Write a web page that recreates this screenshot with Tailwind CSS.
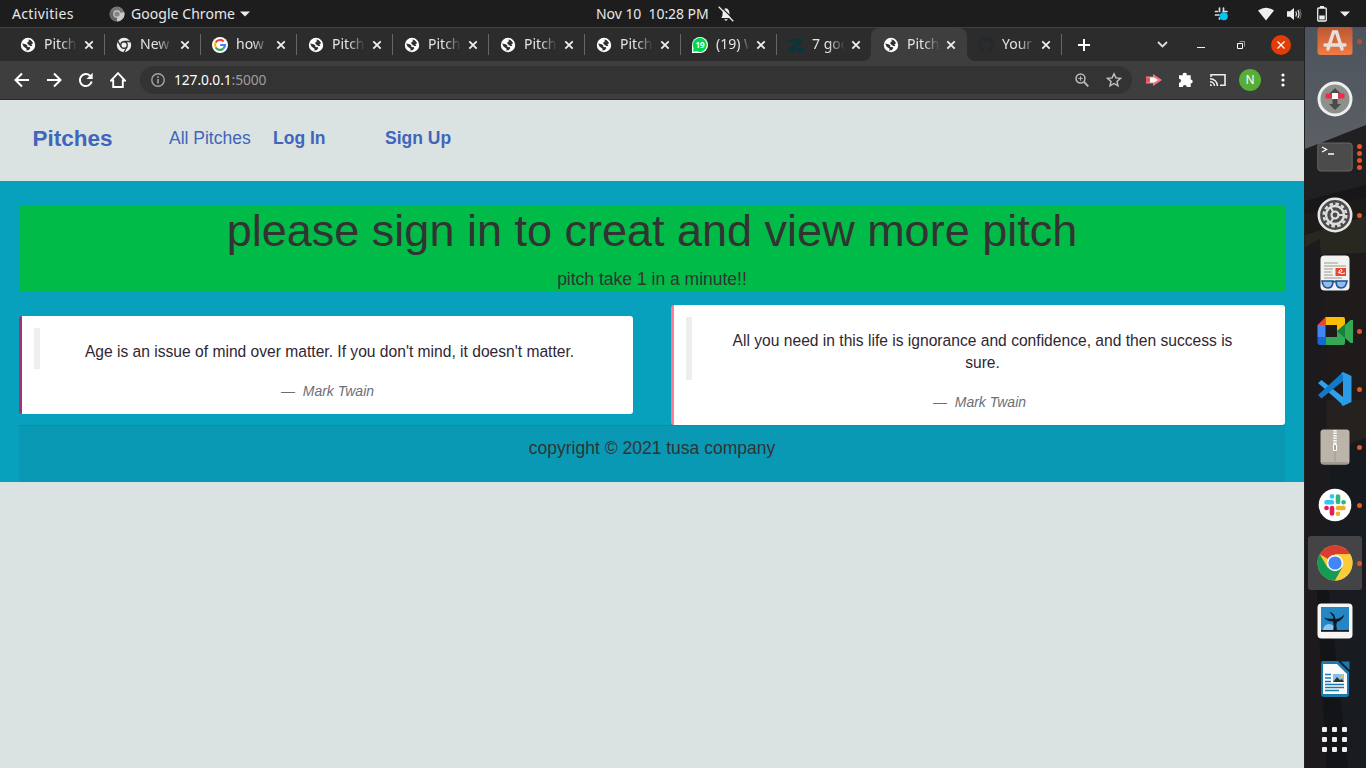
<!DOCTYPE html>
<html lang="en">
<head>
<meta charset="utf-8">
<title>Pitches</title>
<script src="https://cdn.jsdelivr.net/npm/@tailwindcss/browser@4"></script>
</head>
<body class="w-[1366px] h-[768px] overflow-hidden bg-[#1d1d1d] font-['Noto_Sans','Open_Sans',sans-serif]">
<svg width="0" height="0" class="absolute">
  <defs>
    <symbol id="globe" viewBox="0 0 16 16"><circle cx="8" cy="8" r="7.200" fill="#fff"/><path d="M2.200 6.500L5.500 7.200 7.500 8.500 7 9.700 10 10.300 10.200 11.500 8.500 13.300 6 13.500 6.800 12 5.200 10.800 3.500 9.500zM8 2.500L10.500 3 12.700 5.200 12.500 7 11.200 7.500 12.500 8.700 10.800 9.200 9 8.200 7.200 6.500 7.600 5 9.200 4.300z" fill="#303030"/></symbol>
    <symbol id="x" viewBox="0 0 10 10"><path d="M1.300 1.300l7.400 7.400M8.700 1.300L1.300 8.700" stroke="#efefef" stroke-width="1.800" fill="none"/></symbol>
  </defs>
</svg>
<div class="flex h-full flex-col">
  <!-- system bar -->
  <header class="relative flex h-[27px] shrink-0 items-center text-[14px] text-[#e8e8e8]">
    <span class="ml-3 w-[97px] whitespace-nowrap tracking-[0.350px]">Activities</span>
    <svg class="h-4 w-4" viewBox="0 0 16 16"><circle cx="8" cy="8" r="7.500" fill="#777"/><path d="M8 8L15.200 6A7.500 7.500 0 0 1 8 15.500z" fill="#c9c9c9"/><path d="M8 8L1.500 4.500A7.500 7.500 0 0 0 8 15.500z" fill="#666"/><circle cx="8" cy="8" r="3.800" fill="#c9c9c9"/><circle cx="8" cy="8" r="2.600" fill="#858585"/></svg>
    <span class="ml-[6px] w-[104px] whitespace-nowrap tracking-[0.050px]">Google Chrome</span>
    <svg class="ml-[5px] h-[6px] w-[10px]" viewBox="0 0 10 6"><path d="M0 .5h10L5 5.500z" fill="#eee"/></svg>
    <span class="ml-[346px] w-[113px] whitespace-pre tracking-[-0.050px]">Nov 10  10:28 PM</span>
    <svg class="ml-[9px] h-4 w-4" viewBox="0 0 16 16"><path d="M3.200 12c1.300-1.300 1.300-3 1.400-5C4.800 4 6 2.500 8 2.200 10 2.500 11.200 4 11.400 7c.1 2 .2 3.500 1.500 5z" fill="#eee"/><path d="M6 13.200h4L8 15z" fill="#eee"/><path d="M2.200 0L16 13.800" stroke="#1d1d1d" stroke-width="1.200"/><path d="M.7.700l14.600 14.600" stroke="#eee" stroke-width="1.300"/></svg>
    <div class="ml-auto flex items-center pr-4">
      <svg class="h-[15px] w-[15px]" viewBox="0 0 15 15"><g stroke="#ddd" stroke-width="1.700" stroke-linecap="round"><path d="M5.500 2v3.500M9.500 2v3M1.500 5.500h2M1.500 9H5M5.500 12v1M9 5.500h4"/></g><circle cx="9.800" cy="10.200" r="4" fill="#00c8f5"/></svg>
      <svg class="ml-[29px] h-4 w-4" viewBox="0 0 16 16"><path d="M0 4.500Q8-1 16 4.500L8 14.500z" fill="#efefef"/></svg>
      <svg class="ml-3 h-4 w-4" viewBox="0 0 16 16"><path d="M1 5.300h3L8 2v12L4 10.700H1z" fill="#efefef"/><path d="M9.800 5.500q1.500 2.500 0 5M11.800 4q2.400 4 0 8" stroke="#eee" stroke-width="1.200" fill="none"/><path d="M13.800 3q2.700 5 0 10" stroke="#777" fill="none"/></svg>
      <svg class="ml-[15px] h-4 w-[10px]" viewBox="0 0 10 16"><path d="M3 0h4v2H3z" fill="#eee"/><rect x=".7" y="2" width="8.600" height="13" rx="1" fill="none" stroke="#eee" stroke-width="1.300"/><path d="M2.300 9.500h5.400v4H2.300z" fill="#eee"/></svg>
      <svg class="ml-[13px] h-[6px] w-[10px]" viewBox="0 0 10 6"><path d="M0 .5h10L5 5.500z" fill="#eee"/></svg>
    </div>
  </header>

  <div class="flex min-h-0 flex-1">
    <section class="flex w-[1304px] shrink-0 flex-col">
      <!-- tab strip -->
      <div class="flex h-[34px] shrink-0 border-t border-[#404040] bg-[#2c2c2c] pl-2 text-[14px] leading-[20px] text-[#e4e4e4]">
        <div class="relative flex w-24 items-center pl-3"><svg class="h-4 w-4"><use href="#globe"/></svg><span class="mb-[2px] ml-2 w-[33px] overflow-hidden whitespace-nowrap mask-r-from-50%">Pitch</span><svg class="ml-[7px] h-[10px] w-[10px]"><use href="#x"/></svg><i class="absolute -right-px top-[6px] h-[21px] w-px bg-[#666]"></i></div>
        <div class="relative flex w-24 items-center pl-3"><svg class="h-4 w-4" viewBox="0 0 16 16"><circle cx="8" cy="8" r="7.200" fill="#eee"/><circle cx="8" cy="8" r="3.900" fill="#303030"/><circle cx="8" cy="8" r="2.600" fill="#eee"/><path d="M8 4.500h6.500M5 9.700L1.800 4.200M11 9.700L8 15.200" stroke="#303030" stroke-width="1.300"/></svg><span class="mb-[2px] ml-2 w-[33px] overflow-hidden whitespace-nowrap mask-r-from-50%">New</span><svg class="ml-[7px] h-[10px] w-[10px]"><use href="#x"/></svg><i class="absolute -right-px top-[6px] h-[21px] w-px bg-[#666]"></i></div>
        <div class="relative flex w-24 items-center pl-3"><svg class="h-4 w-4" viewBox="0 0 16 16"><circle cx="8" cy="8" r="8" fill="#fff"/><g fill="none" stroke-width="2.200"><path d="M11.700 4.500A5 5 0 0 0 3.700 5.500" stroke="#ea4335"/><path d="M3.700 5.500a5 5 0 0 0 0 5" stroke="#fbbc05"/><path d="M3.700 10.500a5 5 0 0 0 7.600 1.200" stroke="#34a853"/><path d="M11.300 11.700A5 5 0 0 0 13 8H8.200" stroke="#4285f4"/></g></svg><span class="mb-[2px] ml-2 w-[33px] overflow-hidden whitespace-nowrap mask-r-from-50%">how</span><svg class="ml-[7px] h-[10px] w-[10px]"><use href="#x"/></svg><i class="absolute -right-px top-[6px] h-[21px] w-px bg-[#666]"></i></div>
        <div class="relative flex w-24 items-center pl-3"><svg class="h-4 w-4"><use href="#globe"/></svg><span class="mb-[2px] ml-2 w-[33px] overflow-hidden whitespace-nowrap mask-r-from-50%">Pitch</span><svg class="ml-[7px] h-[10px] w-[10px]"><use href="#x"/></svg><i class="absolute -right-px top-[6px] h-[21px] w-px bg-[#666]"></i></div>
        <div class="relative flex w-24 items-center pl-3"><svg class="h-4 w-4"><use href="#globe"/></svg><span class="mb-[2px] ml-2 w-[33px] overflow-hidden whitespace-nowrap mask-r-from-50%">Pitch</span><svg class="ml-[7px] h-[10px] w-[10px]"><use href="#x"/></svg><i class="absolute -right-px top-[6px] h-[21px] w-px bg-[#666]"></i></div>
        <div class="relative flex w-24 items-center pl-3"><svg class="h-4 w-4"><use href="#globe"/></svg><span class="mb-[2px] ml-2 w-[33px] overflow-hidden whitespace-nowrap mask-r-from-50%">Pitch</span><svg class="ml-[7px] h-[10px] w-[10px]"><use href="#x"/></svg><i class="absolute -right-px top-[6px] h-[21px] w-px bg-[#666]"></i></div>
        <div class="relative flex w-24 items-center pl-3"><svg class="h-4 w-4"><use href="#globe"/></svg><span class="mb-[2px] ml-2 w-[33px] overflow-hidden whitespace-nowrap mask-r-from-50%">Pitch</span><svg class="ml-[7px] h-[10px] w-[10px]"><use href="#x"/></svg><i class="absolute -right-px top-[6px] h-[21px] w-px bg-[#666]"></i></div>
        <div class="relative flex w-24 items-center pl-3"><svg class="h-4 w-4" viewBox="0 0 16 16"><path d="M0 16V8a8 8 0 1 1 8 8z" fill="#fff"/><path d="M1.200 14.800L1.500 11A7 7 0 1 1 5 14.300z" fill="#00d750"/><text x="8.100" y="11" text-anchor="middle" font-size="8" font-weight="700" fill="#fff">19</text></svg><span class="mb-[2px] ml-2 w-[33px] overflow-hidden whitespace-nowrap mask-r-from-75%">(19) W</span><svg class="ml-[7px] h-[10px] w-[10px]"><use href="#x"/></svg><i class="absolute -right-px top-[6px] h-[21px] w-px bg-[#666]"></i></div>
        <div class="flex w-[95px] items-center pl-3"><svg class="h-4 w-4" viewBox="0 0 16 16"><path d="M0 2h7a3.500 3.500 0 0 1-7 0zM8.500 2H16L8.500 11zM7.500 5v9H0zM9 14a3.500 3.500 0 0 1 7 0z" fill="#03363d"/></svg><span class="mb-[2px] ml-2 w-[33px] overflow-hidden whitespace-nowrap mask-r-from-50%">7 goo</span><svg class="ml-[6px] h-[10px] w-[10px]"><use href="#x"/></svg></div>
        <div class="relative flex w-24 items-center rounded-t-lg bg-[#3e3e3e] pl-3"><svg class="absolute -left-2 bottom-0 h-2 w-2" viewBox="0 0 8 8"><path d="M8 0v8H0a8 8 0 0 0 8-8" fill="#3e3e3e"/></svg><svg class="absolute -right-2 bottom-0 h-2 w-2" viewBox="0 0 8 8"><path d="M0 0v8h8a8 8 0 0 1-8-8" fill="#3e3e3e"/></svg><svg class="h-4 w-4"><use href="#globe"/></svg><span class="mb-[2px] ml-2 w-[33px] overflow-hidden whitespace-nowrap mask-r-from-50%">Pitch</span><svg class="ml-[6px] h-[10px] w-[10px]"><use href="#x"/></svg></div>
        <div class="relative flex w-[95px] items-center pl-[11px]"><svg class="h-4 w-4" viewBox="0 0 16 16"><path fill="#24292f" d="M8 0C3.580 0 0 3.580 0 8c0 3.540 2.290 6.530 5.470 7.590.4.070.55-.17.55-.38v-1.490c-2.010.37-2.530-.49-2.690-.94-.09-.23-.48-.94-.82-1.130-.28-.15-.68-.52-.01-.53.63-.01 1.080.58 1.230.82.72 1.210 1.870.87 2.330.66.070-.52.280-.87.510-1.070-1.780-.2-3.640-.89-3.640-3.950 0-.87.310-1.590.82-2.150-.08-.2-.36-1.020.08-2.120 0 0 .67-.21 2.200.82a7.420 7.420 0 0 1 4 0c1.530-1.040 2.200-.82 2.200-.82.44 1.100.16 1.920.08 2.120.51.560.82 1.270.82 2.150 0 3.070-1.870 3.750-3.650 3.950.29.250.54.730.54 1.480v2.200c0 .21.150.46.550.38A8 8 0 0 0 8 0"/></svg><span class="mb-[2px] ml-2 w-[33px] overflow-hidden whitespace-nowrap mask-r-from-50%">Your</span><svg class="ml-[6px] h-[10px] w-[10px]"><use href="#x"/></svg><i class="absolute right-0 top-[6px] h-[21px] w-px bg-[#666]"></i></div>
        <div class="flex flex-1 items-center">
          <svg class="ml-4 h-3 w-3" viewBox="0 0 12 12"><path d="M6 0v12M0 6h12" stroke="#fff" stroke-width="2"/></svg>
          <svg class="ml-[67px] h-[7px] w-[11px]" viewBox="0 0 11 7"><path d="M1 1l4.500 4.500L10 1" fill="none" stroke="#ddd" stroke-width="1.800"/></svg>
          <svg class="ml-[29px] h-3 w-2" viewBox="0 0 8 12"><path d="M0 8.500h8" stroke="#eee"/></svg>
          <svg class="ml-8 h-2 w-2" viewBox="0 0 8 8"><path d="M2.500.5h5v5" fill="none" stroke="#999"/><path d="M.5 2.500h5v5h-5z" fill="none" stroke="#fff"/></svg>
          <span class="ml-[26px] flex h-5 w-5 items-center justify-center rounded-full bg-[#e43c06]"><svg class="h-2 w-2" viewBox="0 0 8 8"><path d="M.5.500l7 7M7.500.500l-7 7" stroke="#fff" stroke-width="1.300"/></svg></span>
        </div>
      </div>
      <!-- address bar -->
      <div class="flex h-[39px] shrink-0 items-center border-b border-[#292929] bg-[#3e3e3e] pl-[14px]">
        <div class="flex gap-4 text-white">
          <svg class="h-4 w-4" viewBox="0 0 16 16"><path d="M15 8H2M8 1.500L1.500 8 8 14.500" fill="none" stroke="#fff" stroke-width="2"/></svg>
          <svg class="h-4 w-4" viewBox="0 0 16 16"><path d="M1 8h13M8 1.500L14.500 8 8 14.500" fill="none" stroke="#fff" stroke-width="2"/></svg>
          <svg class="h-4 w-4" viewBox="0 0 16 16"><path d="M13.700 9.500A6 6 0 1 1 12 3.700" fill="none" stroke="#fff" stroke-width="2"/><path d="M14.700.800v6.200H8.500z" fill="#fff"/></svg>
          <svg class="h-4 w-4" viewBox="0 0 16 16"><path d="M8 1.200L1 8.500h2.200V15h9.600V8.500H15z" fill="none" stroke="#fff" stroke-width="1.900"/></svg>
        </div>
        <div class="ml-[14px] flex h-7 w-[992px] items-center rounded-full bg-[#333] pl-[11px]">
          <svg class="h-[14px] w-[14px]" viewBox="0 0 14 14"><circle cx="7" cy="7" r="6.200" fill="none" stroke="#a2a5a8" stroke-width="1.400"/><path d="M7 6v4.500M7 3.300v1.600" stroke="#a2a5a8" stroke-width="1.600"/></svg>
          <span class="ml-[9px] text-[13.800px] tracking-[-0.100px] text-white">127.0.0.1<span class="text-[#9c9c9c]">:5000</span></span>
          <svg class="ml-auto h-[14px] w-[14px]" viewBox="0 0 14 14"><circle cx="5.500" cy="5.500" r="4.500" fill="none" stroke="#bbb" stroke-width="1.500"/><path d="M9 9l4.300 4.300" stroke="#bbb" stroke-width="1.800"/><path d="M3.300 5.500h4.400M5.500 3.300v4.400" stroke="#bbb"/></svg>
          <svg class="ml-[17px] mr-[10px] h-4 w-4" viewBox="0 0 16 16"><path d="M8 1.800l1.900 4.100 4.500.500L11 9.400l1 4.500-4-2.400-4 2.400 1-4.500L1.600 6.400l4.500-.500z" fill="none" stroke="#c4c4c4" stroke-width="1.400"/></svg>
        </div>
        <svg class="ml-[13px] h-4 w-[18px]" viewBox="0 0 18 16"><path d="M1 4.500h7V2L17 8 8 14v-2.500H1z" fill="#f27780"/><path d="M1 6h4v4H1z" fill="#e85360"/><path d="M5 5.500h4v5H5zM9 5.500l4 2.500-4 2.500z" fill="#fff"/></svg>
        <svg class="ml-[15px] h-4 w-4" viewBox="0 0 16 16"><path d="M1 3.200h3.800a2 2 0 1 1 3.900 0h4v4.200a2 2 0 1 1 0 4V15H8.800a2 2 0 0 0-4 0H1v-4.200a2 2 0 0 0 0-4z" fill="#fff"/></svg>
        <svg class="ml-[15px] h-[14px] w-[18px]" viewBox="0 0 18 14"><path d="M2 4V1.700h14v10.600h-5" fill="none" stroke="#eee" stroke-width="1.600"/><path d="M1 5.700A7.500 7.500 0 0 1 8.500 13M1 8.700A4.500 4.500 0 0 1 5.500 13" fill="none" stroke="#eee" stroke-width="1.500"/><path d="M1 11a2 2 0 0 1 2 2H1z" fill="#eee"/></svg>
        <span class="ml-3 flex h-[22px] w-[22px] items-center justify-center rounded-full bg-[#57ad36] text-[12px] text-white">N</span>
        <svg class="ml-[20px] h-[14px] w-[4px]" viewBox="0 0 4 14"><circle cx="2" cy="2" r="1.600" fill="#fff"/><circle cx="2" cy="7" r="1.600" fill="#fff"/><circle cx="2" cy="12" r="1.600" fill="#fff"/></svg>
      </div>
      <!-- web page -->
      <main class="flex flex-1 flex-col bg-[#dae3e1] font-['Liberation_Sans',Arial,sans-serif] text-[17.500px] leading-[25px] text-[#333]">
        <nav class="flex h-[81px] shrink-0 items-center pb-[5px] pl-[32.500px] text-[#4066bb]">
          <a class="w-[136.500px] text-[22.500px] font-bold">Pitches</a>
          <a class="w-[104px]">All Pitches</a>
          <a class="w-[112px] font-bold">Log In</a>
          <a class="font-bold">Sign Up</a>
        </nav>
        <div class="flex h-[301px] shrink-0 flex-col bg-[#08a1bd] px-[19px] pt-[25px] text-center">
          <div class="h-[86px] shrink-0 bg-[#00bb47]">
            <h1 class="text-[45px] leading-[50px]">please sign in to creat and view more pitch</h1>
            <p class="mt-[11px]">pitch take 1 in a minute!!</p>
          </div>
          <div class="mt-[13px] flex h-[120px] shrink-0 items-center justify-between text-[15.625px] leading-[22.300px] text-[#2f2733]">
            <figure class="h-[98px] w-[614px] rounded-[3px] border-l-[3px] border-[#a63076] bg-white px-3 pt-3">
              <blockquote class="h-[41px] border-l-[6px] border-[#eee] pr-[2px] pt-[13px]">Age is an issue of mind over matter. If you don't mind, it doesn't matter.</blockquote>
              <figcaption class="mt-[11px] text-[14px] text-[#6c6f78]">—&nbsp; <i>Mark Twain</i></figcaption>
            </figure>
            <figure class="h-[120px] w-[614px] rounded-[3px] border-l-[3px] border-[#ff7b93] bg-white px-3 pt-3">
              <blockquote class="h-[63px] border-l-[6px] border-[#eee] px-[40px] pt-[13px]">All you need in this life is ignorance and confidence, and then success is sure.</blockquote>
              <figcaption class="mt-[11px] text-[14px] text-[#6c6f78]">—&nbsp; <i>Mark Twain</i></figcaption>
            </figure>
          </div>
          <footer class="flex-1 border-t border-[#088ea6] bg-[#0999b5] pt-[10px]">copyright © 2021 tusa company</footer>
        </div>
      </main>
    </section>

    <!-- dock -->
    <aside class="relative w-[62px] overflow-hidden border-l border-[#222]">
      <svg class="absolute inset-0 h-full w-full" viewBox="0 0 62 741" preserveAspectRatio="none">
        <defs><linearGradient id="sky" x2="0" y2="1"><stop stop-color="#4b535c"/><stop offset="1" stop-color="#5c6065"/></linearGradient>
        <linearGradient id="orange" x2="0" y2="1"><stop stop-color="#b95833"/><stop offset="1" stop-color="#f37b45"/></linearGradient></defs>
        <path d="M0 0h62v741H0z" fill="#181b20"/><path d="M0 0h62v100L0 123z" fill="url(#sky)"/>
        <path d="M0 122L62 98v60L0 174z" fill="#202022"/><path d="M0 187l62-18v20L0 208z" fill="#1e1a18"/><path d="M0 174l62-16v11L0 187z" fill="#171719"/><path d="M0 208l62-19v37L0 228z" fill="#292820"/><path d="M0 228h62v145H0z" fill="#1f1b1b"/><path d="M0 220l15-8 10 160v369H0z" fill="#1c1a1c"/><path d="M22 373h40v38l-40 15z" fill="#24211f"/><path d="M26 424l36-13v70H26z" fill="#16191d"/><path d="M12 563h12l20 178H22z" fill="#121417"/>
      </svg>
      <div class="relative -mt-[15px] flex flex-col pr-[2px]">
        <div class="relative flex h-[58px] items-center justify-center"><svg class="h-9 w-9" viewBox="0 0 36 36"><rect x=".5" y="4" width="35" height="28" rx="3" fill="url(#orange)"/><path d="M11 26l5.500-17h3L25 26M8 22h20" stroke="#e5e0dd" stroke-width="3.500" fill="none" stroke-linecap="round"/></svg><i class="absolute right-[2px] h-[5px] w-[5px] rounded-full bg-[#b84d2c]"></i></div>
        <div class="flex h-[58px] items-center justify-center"><svg class="h-9 w-9" viewBox="0 0 36 36"><circle cx="18" cy="18" r="16" fill="#8e918b" stroke="#eee" stroke-width="3"/><path d="M18 7l6 6h-3.500v10H24l-6 6-6-6h3.500V13H12z" fill="#4a4c48"/><rect x="8.500" y="12.500" width="19" height="5" rx="1" fill="#ef2c49"/><path d="M15 12h6v6h-6z" fill="#fff"/></svg></div>
        <div class="relative flex h-[58px] items-center justify-center"><svg class="h-9 w-9" viewBox="0 0 36 36"><rect x=".8" y="4" width="34.400" height="28" rx="3" fill="#4b4b4b" stroke="#666"/><path d="M5 8l4.500 2.500L5 13M11 15h6" fill="none" stroke="#fff" stroke-width="1.300"/></svg><div class="absolute right-[2px] flex flex-col gap-[2.300px]"><i class="h-[5px] w-[5px] rounded-full bg-[#e95420]"></i><i class="h-[5px] w-[5px] rounded-full bg-[#e95420]"></i><i class="h-[5px] w-[5px] rounded-full bg-[#e95420]"></i><i class="h-[5px] w-[5px] rounded-full bg-[#e95420]"></i></div></div>
        <div class="relative flex h-[58px] items-center justify-center"><svg class="h-9 w-9" viewBox="0 0 36 36"><circle cx="18" cy="18" r="16.200" fill="#4a4a4a" stroke="#e6e6e6" stroke-width="2.600"/><circle cx="18" cy="18" r="11.300" fill="none" stroke="#ddd" stroke-width="2.500" stroke-dasharray="3.500 2.420"/><circle cx="18" cy="18" r="9" fill="none" stroke="#ddd" stroke-width="2.500"/><circle cx="18" cy="18" r="3.500" fill="#4a4a4a" stroke="#ddd" stroke-width="2.200"/><path d="M21 18h7M16.500 15.500L13 9.500M16.500 20.500L13 26.500" stroke="#ddd" stroke-width="2"/></svg><i class="absolute right-[2px] h-[5px] w-[5px] rounded-full bg-[#e95420]"></i></div>
        <div class="flex h-[58px] items-center justify-center"><svg class="h-9 w-9" viewBox="0 0 36 36"><rect x="3.500" y=".5" width="29" height="35" rx="4" fill="#f2f2f1"/><path d="M7 8h14M7 11h22M7 14h9M7 17h8M7 20h9M7 23h18" stroke="#b9b7af" stroke-width="1.300"/><rect x="18.500" y="13" width="10.500" height="8" fill="#eb4432"/><path d="M21 18q5-1 4-3t-3 1q0 4 6 2" stroke="#fff" fill="none"/><g fill="#94bce8" stroke="#195096" stroke-width="1.600"><path d="M5 26h11q0 7-5 7t-6-7zM19 26h11q-1 7-6 7t-5-7zM15 27.500q2.500-2 5 0"/></g></svg></div>
        <div class="relative flex h-[58px] items-center justify-center"><svg class="h-9 w-9" viewBox="0 0 36 36"><path d="M8.500 4v8H.5z" fill="#ea4335"/><path d="M8.500 4H26q2 0 2 2v12h-8v-6H8.500z" fill="#fbbc04"/><path d="M.5 12h8v12h-8z" fill="#4285f4"/><path d="M.5 24h8v8H3q-2.500 0-2.500-2z" fill="#1967d2"/><path d="M8.500 24H20v-6h8v12q0 2-2 2H8.500zM28 12l5.500-5H36v23h-2.500L28 25z" fill="#34a853"/><path d="M20 18l8-7v14z" fill="#188038"/></svg><i class="absolute right-[2px] h-[5px] w-[5px] rounded-full bg-[#e95420]"></i></div>
        <div class="relative flex h-[58px] items-center justify-center"><svg class="h-9 w-9" viewBox="0 0 36 36"><path d="M1 12l3.500-3L26 26v8z" fill="#30a0ec"/><path d="M1 24l3.500 3.500L26 10V1z" fill="#1278c8"/><path d="M26 1l8.500 4v26L26 35l-2-2q2 0 2-2V5q0-2-2-2z" fill="#299be7"/></svg><i class="absolute right-[2px] h-[5px] w-[5px] rounded-full bg-[#e95420]"></i></div>
        <div class="relative flex h-[58px] items-center justify-center"><svg class="h-9 w-9" viewBox="0 0 36 36"><rect x="3.500" y=".5" width="29" height="35" rx="3" fill="#bab5a8"/><path d="M4 33h28q-1 2.500-3 2.500H7q-3 0-3-2.500z" fill="#a09b8e"/><path d="M18 22v11" stroke="#a09b8f"/><path d="M18 1v15" stroke="#f7f7f5" stroke-width="3.500" stroke-dasharray="1.500 1"/><rect x="16.500" y="15.500" width="3" height="6" rx="1" fill="#999" stroke="#fff" stroke-width="1.200"/></svg><i class="absolute right-[2px] h-[5px] w-[5px] rounded-full bg-[#e95420]"></i></div>
        <div class="relative flex h-[58px] items-center justify-center"><svg class="h-9 w-9" viewBox="0 0 36 36"><circle cx="18" cy="18" r="16.300" fill="#fff"/><g stroke-width="4.600" stroke-linecap="round"><path d="M9.500 15.200h5.500M15 9.300v.1" stroke="#36c5f0"/><path d="M21 9.500V15M26.500 15.200h.1" stroke="#2eb67d"/><path d="M21 21h5.500M21 26.700v.1" stroke="#ecb22e"/><path d="M15 21v5.500M9.500 21h.1" stroke="#e01e5a"/></g></svg><i class="absolute right-[2px] h-[5px] w-[5px] rounded-full bg-[#e95420]"></i></div>
        <div class="relative flex h-[58px] items-center justify-center"><div class="flex h-[54px] w-[54px] items-center justify-center rounded-[3px] bg-[#444447]"><svg class="h-9 w-9" viewBox="0 0 36 36"><circle cx="18" cy="18" r="17.500" fill="#fbc837"/><path d="M18 18L2.800 9.300A17.500 17.500 0 0 1 33.200 9.300H18z" fill="#d93c31"/><path d="M2.800 9.300A17.500 17.500 0 0 0 18 35.500L25.500 22.500 10.500 22.500z" fill="#169b55"/><path d="M33.200 9.300H18L25.500 22.500 18 35.500A17.500 17.500 0 0 0 33.200 9.300" fill="#fccb3a"/><circle cx="18" cy="18" r="8.300" fill="#f5f5f5"/><circle cx="18" cy="18" r="6.600" fill="#4285f4"/></svg></div><i class="absolute right-[2px] h-[5px] w-[5px] rounded-full bg-[#e95420]"></i></div>
        <div class="flex h-[58px] items-center justify-center"><svg class="h-9 w-9" viewBox="0 0 36 36"><rect x=".5" y=".5" width="35" height="35" rx="4" fill="#f6f6f5"/><path d="M4 4h28v25H4z" fill="#2586c4"/><path d="M6 27a6 6 0 0 1 12 0z" fill="#8dc6ed"/><path d="M4 27h28v1.500H4zM16 28q1.500-5 0-9.500-6 0-9-4 5 2 9.500 1Q16 12 12 9q6 1 6.500 7 4 0 9-4.500-2 6-7.500 7.500-1.500 4 .5 9z" fill="#111a22"/></svg></div>
        <div class="flex h-[58px] items-center justify-center"><svg class="h-9 w-9" viewBox="0 0 36 36"><path d="M6 0h15l11 11v22q0 3-3 3H7q-3 0-3-3V3q0-3 2-3z" fill="#1a79ad"/><path d="M6 3h14l10 10v20H6z" fill="#fbfbfb"/><path d="M24 .500h8.500V9z" fill="#1a79ad"/><path d="M8 13.500h6M8 17h6M8 20.500h6M8 23.500h19M8 26.500h19M8 29.500h14" stroke="#1a79ad" stroke-width="1.500"/><path d="M16 13h11v8H16z" fill="#83c1e8"/><path d="M16 21l4-5 3 3 2-1 2 3z" fill="#333"/><circle cx="25" cy="15" r="1.500" fill="#fbc02d"/></svg></div>
        <div class="mt-[2px] flex h-[58px] items-center justify-center"><div class="grid grid-cols-3 gap-[5px]"><i class="h-[5px] w-[5px] rounded-[1px] bg-[#eee]"></i><i class="h-[5px] w-[5px] rounded-[1px] bg-[#eee]"></i><i class="h-[5px] w-[5px] rounded-[1px] bg-[#eee]"></i><i class="h-[5px] w-[5px] rounded-[1px] bg-[#eee]"></i><i class="h-[5px] w-[5px] rounded-[1px] bg-[#eee]"></i><i class="h-[5px] w-[5px] rounded-[1px] bg-[#eee]"></i><i class="h-[5px] w-[5px] rounded-[1px] bg-[#eee]"></i><i class="h-[5px] w-[5px] rounded-[1px] bg-[#eee]"></i><i class="h-[5px] w-[5px] rounded-[1px] bg-[#eee]"></i></div></div>
      </div>
    </aside>
  </div>
</div>
</body>
</html>
